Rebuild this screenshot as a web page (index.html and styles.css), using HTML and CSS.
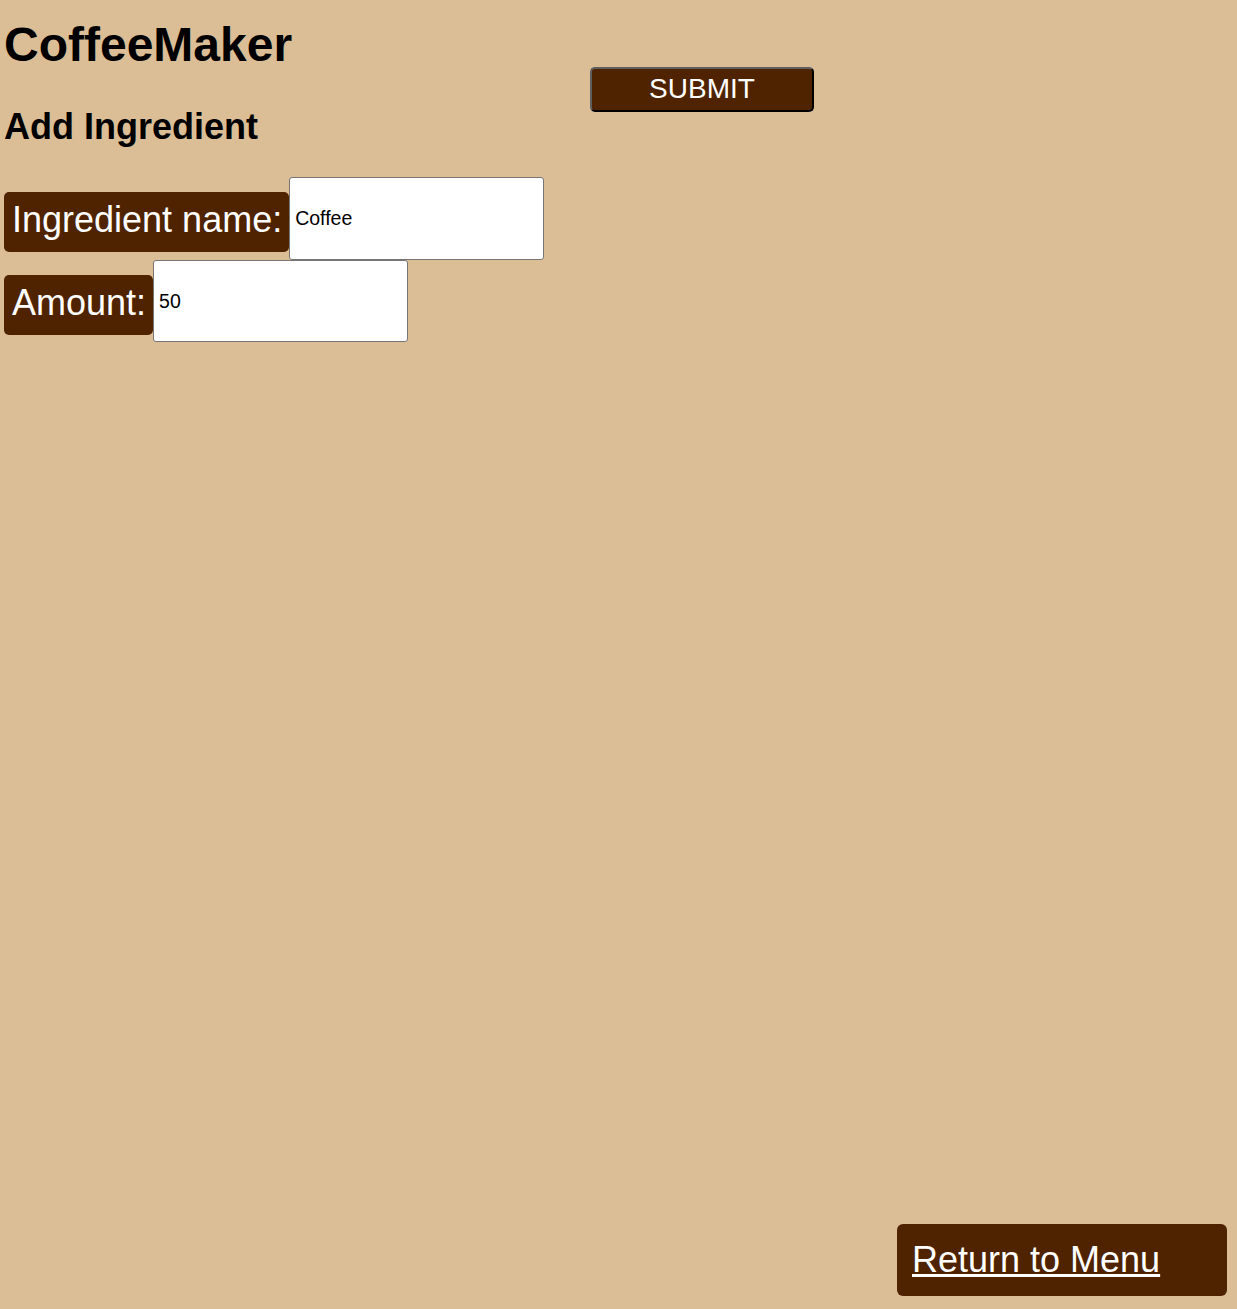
FILE: index.html
```html
<!DOCTYPE html>
<html lang="en">
<head>
<meta charset="utf-8">
<title>CoffeeMaker</title>
<link rel="stylesheet" href="styles.css">
</head>
<body>
<div class="page">
  <div class="top">
    <h1 class="title">CoffeeMaker</h1>
    <h2 class="subtitle">Add Ingredient</h2>
    <button class="submit" type="button">SUBMIT</button>
  </div>
  <form class="form">
    <div class="row">
      <label class="label" for="name">Ingredient name:</label>
      <input class="field" id="name" type="text" value="Coffee">
    </div>
    <div class="row">
      <label class="label" for="amount">Amount:</label>
      <input class="field" id="amount" type="text" value="50">
    </div>
  </form>
  <a class="back" href="#">Return to Menu</a>
</div>
</body>
</html>
```

FILE: styles.css
```css
html, body {
  margin: 0;
  padding: 0;
  background: #dbbe96;
  font-family: "Liberation Sans", Arial, sans-serif;
}
.page {
  box-sizing: border-box;
  min-height: 100vh;
  display: flex;
  flex-direction: column;
  padding: 0 10px 13px 4px;
}
.top {
  display: grid;
  grid-template-columns: 586px auto;
  align-items: start;
}
.title {
  grid-column: 1;
  grid-row: 1;
  margin: 17px 0 0 0;
  font-size: 48px;
  line-height: 56px;
  font-weight: bold;
  color: #000;
}
.subtitle {
  grid-column: 1;
  grid-row: 2;
  margin: 33px 0 0 0;
  font-size: 36px;
  line-height: 42px;
  font-weight: bold;
  color: #000;
}
.submit {
  grid-column: 2;
  grid-row: 1 / 3;
  justify-self: start;
  margin-top: 67px;
  width: 224px;
  height: 45px;
  box-sizing: border-box;
  background: #4f2300;
  color: #fff;
  font-family: "Liberation Sans", Arial, sans-serif;
  font-size: 28px;
  line-height: 1;
  padding: 0 0 2px;
  border-width: 2px;
  border-style: solid;
  border-color: #5e5e5e #000 #000 #5e5e5e;
  border-radius: 5px;
}
.form {
  margin: 29px 0 0;
  display: flex;
  flex-direction: column;
}
.row {
  display: flex;
  align-items: flex-start;
}
.label {
  margin-top: 15px;
  height: 60px;
  box-sizing: border-box;
  padding: 0 7px 4px 8px;
  display: flex;
  align-items: center;
  background: #4f2300;
  color: #fff;
  font-size: 36px;
  border-radius: 5px;
}
.field {
  width: 255px;
  height: 83px;
  box-sizing: border-box;
  margin: 0;
  padding: 0 5px;
  border: 1px solid #767676;
  border-radius: 3px;
  background: #fff;
  font-family: "Liberation Sans", Arial, sans-serif;
  font-size: 19.5px;
  color: #000;
}
.row + .row .field {
  height: 82px;
}
.back {
  margin-top: auto;
  align-self: flex-end;
  width: 330px;
  height: 72px;
  box-sizing: border-box;
  padding: 15px 15px 0;
  background: #4f2300;
  color: #fff;
  font-size: 36px;
  line-height: 42px;
  border-radius: 6px;
  text-decoration: underline;
}
```
